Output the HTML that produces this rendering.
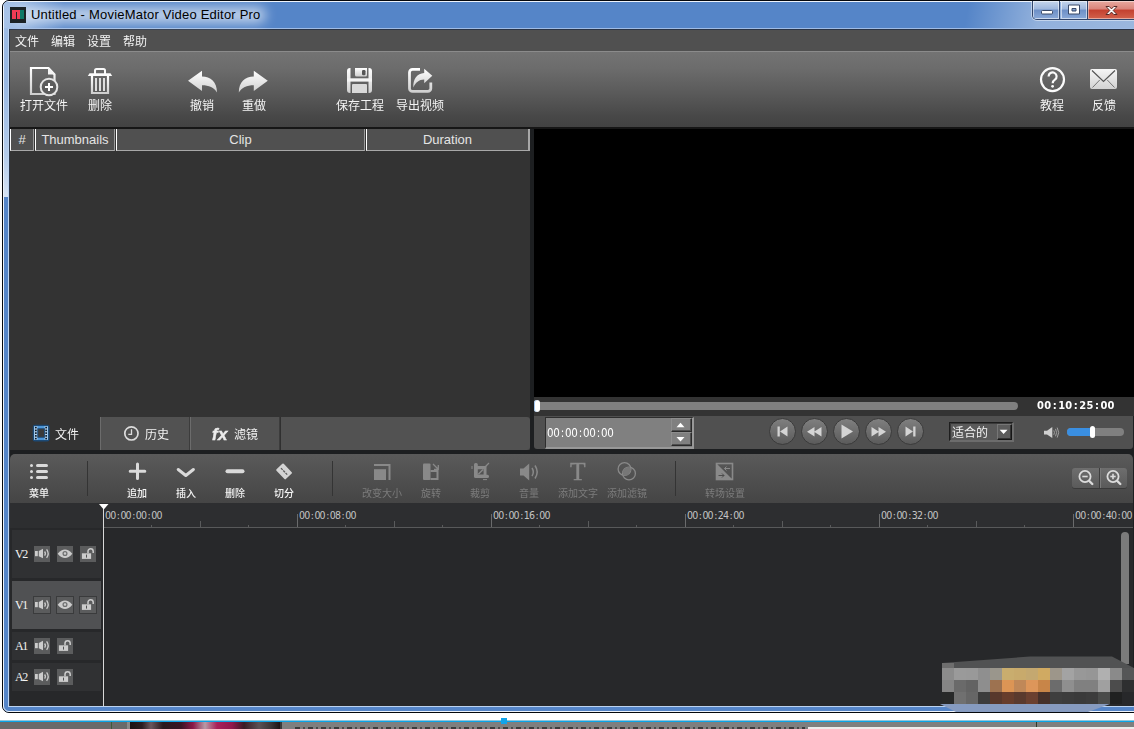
<!DOCTYPE html>
<html lang="zh-CN">
<head>
<meta charset="utf-8">
<title>Untitled - MovieMator Video Editor Pro</title>
<style>
*{box-sizing:border-box;margin:0;padding:0}
html,body{width:1134px;height:729px;overflow:hidden;background:#fff}
body{position:relative;font-family:"Liberation Sans","Noto Sans CJK SC",sans-serif;font-size:12px;color:#fff}
.a{position:absolute}
.cj,.lbl,.sl{will-change:transform}
.cj{font-family:"Liberation Sans","Noto Sans CJK SC",sans-serif;font-size:12px;line-height:14px;white-space:nowrap;color:#f2f2f2}
.lbl{position:absolute;text-align:center;white-space:nowrap;font-size:12px;line-height:14px;color:#f4f4f4;transform:translateX(-50%)}
.sl{position:absolute;text-align:center;white-space:nowrap;font-size:10px;line-height:12px;color:#f4f4f4;font-weight:500;transform:translateX(-50%)}
.sl.d{color:#7c7c7c;font-weight:400}
.vd{font-family:"DejaVu Sans Condensed","DejaVu Sans","Liberation Sans",sans-serif;font-stretch:condensed}
.vd i,.rt i{font-style:normal}
#dur,#spt{will-change:transform}
#dur i{margin:0 1.250px}
#spt i{margin:0 1.150px}
.rt i{margin:0 1.300px}
.hd{position:absolute;top:129px;height:22px;background:#505050;border-left:1px solid #fff;border-right:1px solid #9a9a9a;border-bottom:1px solid #a8a8a8;font-size:13px;line-height:22px;text-align:center;color:#e4e4e4}
.tk{position:absolute;left:12px;width:89px;background:#303133}
.tb{position:absolute;width:16px;height:16px;background:#5b5c5d}
.tn{position:absolute;left:15px;font-family:"Liberation Serif","Noto Serif CJK SC",serif;font-size:12px;line-height:12px;color:#f4f4f4;letter-spacing:-1.300px}
.rt{position:absolute;top:509px;font-family:"DejaVu Sans Condensed","DejaVu Sans","Liberation Sans",sans-serif;font-stretch:condensed;font-size:10.500px;line-height:12px;color:#c4c4c4;white-space:nowrap;letter-spacing:-.8px}
.mj{position:absolute;top:514px;width:1px;height:13px;background:#6a6b6c}
.md{position:absolute;top:521px;width:1px;height:6px;background:#5a5b5c}
.mn{position:absolute;top:525px;width:1px;height:2px;background:#5a5b5c}
</style>
</head>
<body>
<!-- desktop strip behind window -->
<div class="a" id="desk" style="left:0;top:713px;width:1134px;height:16px;background:#fff"></div>
<div class="a" style="left:0;top:722px;width:1134px;height:7px;background:#7f7f7f"></div>
<div class="a" style="left:0;top:722px;width:130px;height:7px;background:#6a6a6a"></div>
<div class="a" style="left:111px;top:722px;width:1px;height:7px;background:#3f5a3a"></div>
<div class="a" style="left:127px;top:722px;width:3px;height:7px;background:#8a8a8a"></div>
<div class="a" style="left:130px;top:722px;width:150px;height:7px;background:linear-gradient(90deg,#1c1214 0,#2a1c20 8%,#6a565c 14%,#2a1a1e 22%,#3a1424 34%,#8a1848 42%,#b89aa6 50%,#a8205a 58%,#90184c 68%,#3a1a24 76%,#5a5054 86%,#3a3436 94%,#1c1214 100%)"></div>
<div class="a" style="left:280px;top:722px;width:2px;height:7px;background:#3a3a3a"></div>
<div class="a" style="left:295px;top:727px;width:510px;height:2px;background:repeating-linear-gradient(90deg,#3c3c3c 0,#3c3c3c 5px,#7f7f7f 5px,#7f7f7f 8px,#4a4a4a 8px,#4a4a4a 10px,#7f7f7f 10px,#7f7f7f 13px)"></div>
<div class="a" style="left:808px;top:727px;width:326px;height:2px;background:#ececec"></div>
<div class="a" style="left:1036px;top:722px;width:1px;height:5px;background:#2e3a2a"></div>
<div class="a" style="left:0;top:721px;width:1134px;height:1px;background:#0aa5e8"></div>
<div class="a" style="left:0;top:720px;width:1134px;height:1px;background:#8fc6dc"></div>
<div class="a" style="left:501px;top:718px;width:6px;height:6px;background:#12a4ea"></div>

<!-- window frame -->
<div class="a" id="frame" style="left:2px;top:0;width:1140px;height:713px;border:1px solid #05080d;border-radius:7px 0 0 7px;background:#5585c8"></div>
<div class="a" id="frame2" style="left:3px;top:1px;width:1140px;height:711px;border:1px solid #eef4fc;border-radius:6px 0 0 6px;background:#5585c8"></div>
<div class="a" id="tgrad" style="left:4px;top:2px;width:1130px;height:27px;border-radius:5px 0 0 0;background:linear-gradient(100deg,rgba(255,255,255,0) 0,rgba(255,255,255,0) 950px,rgba(255,255,255,.36) 1022px,rgba(255,255,255,.42) 1134px),linear-gradient(90deg,#a8c3e8 0,#9dbbe4 14px,#5585c8 60px)"></div>
<div class="a" id="lstripe" style="left:4px;top:28px;width:5px;height:169px;background:linear-gradient(#9dbbe4 0,#98b7e2 30%,#b4cbea 75%,#d6e3f4 100%)"></div>
<!-- client inner border -->
<div class="a" id="client0" style="left:8px;top:28px;width:1130px;height:679px;border:1px solid #bcd3f0;border-top-color:#9fbce6;background:#1d1f21"></div>
<div class="a" id="client" style="left:9px;top:29px;width:1130px;height:677px;border:1px solid #2a3446;background:#1d1f21"></div>

<!-- title bar -->
<div class="a" id="glow" style="left:14px;top:7px;width:252px;height:16px;border-radius:8px;background:rgba(255,255,255,.62);filter:blur(6px)"></div>
<div class="a" id="appicon" style="left:10px;top:7px;width:16px;height:16px;background:#1c2326"></div>
<div class="a" style="left:12px;top:10px;width:8px;height:9px;background:#ee3b55"></div>
<div class="a" style="left:20px;top:10px;width:4px;height:9px;background:#0e7a68"></div>
<div class="a" style="left:16px;top:12px;width:1px;height:7px;background:#1c2326"></div>
<div class="a" id="title" style="left:31px;top:7px;font-size:13px;line-height:16px;color:#000;white-space:nowrap;letter-spacing:.21px">Untitled - MovieMator Video Editor Pro</div>
<!-- caption buttons -->
<div class="a" id="capbtns" style="left:1032px;top:1px;width:110px;height:19px;border:1px solid #31456b;border-top:none;border-radius:0 0 5px 5px;overflow:hidden;box-shadow:0 0 0 1px rgba(255,255,255,.45)">
  <div class="a" style="left:0;top:0;width:27px;height:18px;background:linear-gradient(#c6d6ec 0,#9db6dc 45%,#6d8fc6 50%,#8aa9d8 100%);border-right:1px solid #31456b;box-shadow:inset 0 0 0 1px rgba(255,255,255,.55)"></div>
  <div class="a" style="left:28px;top:0;width:27px;height:18px;background:linear-gradient(#c6d6ec 0,#9db6dc 45%,#6d8fc6 50%,#8aa9d8 100%);border-right:1px solid #31456b;box-shadow:inset 0 0 0 1px rgba(255,255,255,.55)"></div>
  <div class="a" style="left:55px;top:0;width:55px;height:18px;background:linear-gradient(#e8a99f 0,#d9837a 45%,#c4402f 50%,#d2624c 100%);box-shadow:inset 0 0 0 1px rgba(255,255,255,.45)"></div>
</div>
<svg class="a" style="left:0;top:0" width="1134" height="32" viewBox="0 0 1134 32">
  <rect x="1041.500" y="10.500" width="11" height="3.500" rx="1" fill="#fff" stroke="#3a4a68" stroke-width="1"/>
  <path d="M1068.500 5h11v9h-11z M1072 8.500h4v2.500h-4z" fill="#fff" fill-rule="evenodd" stroke="#3a4a68" stroke-width="1"/>
  <path d="M1106 6.500h3.200l2.300 2.400 2.300-2.400h3.200l-3.800 4 3.800 4h-3.200l-2.300-2.400-2.300 2.400h-3.200l3.800-4z" fill="#fff" stroke="#5a2a26" stroke-width="1" stroke-linejoin="round"/>
</svg>

<div class="a" style="left:9px;top:0;width:1125px;height:1px;background:#05080d"></div>
<!-- menu bar -->
<div class="a" id="menubar" style="left:10px;top:30px;width:1124px;height:21px;background:#505050"></div>
<div class="a cj" style="left:15px;top:35px;">文件</div>
<div class="a cj" style="left:51px;top:35px;">编辑</div>
<div class="a cj" style="left:87px;top:35px;">设置</div>
<div class="a cj" style="left:123px;top:35px;">帮助</div>

<!-- main toolbar -->
<div class="a" id="toolbar" style="left:10px;top:51px;width:1124px;height:76px;background:linear-gradient(#737373 0,#6c6c6c 22%,#5a5a5a 55%,#484848 85%,#424242 100%);border-top:1px solid #8b8b8b"></div>
<div class="a" style="left:10px;top:127px;width:1124px;height:2px;background:#161616"></div>
<div class="lbl" style="left:44px;top:99px">打开文件</div>
<div class="lbl" style="left:100px;top:99px">删除</div>
<div class="lbl" style="left:202px;top:99px">撤销</div>
<div class="lbl" style="left:253.500px;top:99px">重做</div>
<div class="lbl" style="left:360px;top:99px">保存工程</div>
<div class="lbl" style="left:420px;top:99px">导出视频</div>
<div class="lbl" style="left:1051.500px;top:99px">教程</div>
<div class="lbl" style="left:1104px;top:99px">反馈</div>

<!-- left panel -->
<div class="a" id="leftpanel" style="left:10px;top:129px;width:520px;height:321px;background:#333"></div>
<div class="hd" style="left:10px;width:24px">#</div>
<div class="hd" style="left:35px;width:80px">Thumbnails</div>
<div class="hd" style="left:116px;width:249px">Clip</div>
<div class="hd" style="left:366px;width:164px;border-right:2px solid #a8a8a8">Duration</div>
<!-- tabs -->
<div class="a" style="left:100px;top:417px;width:430px;height:33px;background:#525252;border-radius:0 3px 3px 0"></div>
<div class="a" style="left:100px;top:417px;width:1px;height:33px;background:#6c6c6c"></div>
<div class="a" style="left:190px;top:417px;width:1px;height:33px;background:#6c6c6c"></div>
<div class="a" style="left:189px;top:417px;width:1px;height:33px;background:#3c3c3c"></div>
<div class="a" style="left:280px;top:417px;width:1px;height:33px;background:#303030"></div>
<div class="a" style="left:279px;top:417px;width:1px;height:33px;background:#3c3c3c"></div>
<div class="a cj" style="left:55px;top:428px">文件</div>
<div class="a cj" style="left:145px;top:428px">历史</div>
<div class="a cj" style="left:234px;top:428px">滤镜</div>
<div class="a" style="left:212px;top:425px;font-size:17px;line-height:20px;font-weight:bold;font-style:italic;color:#ececec;letter-spacing:.3px;-webkit-text-stroke:.45px #ececec;will-change:transform">fx</div>

<!-- preview -->
<div class="a" id="video" style="left:534px;top:129px;width:600px;height:268px;background:#000"></div>
<div class="a" id="scrubrow" style="left:534px;top:397px;width:600px;height:19px;background:#333"></div>
<div class="a" style="left:536px;top:402px;width:482px;height:8px;background:#808080;border-radius:0 4px 4px 0"></div>
<div class="a" style="left:534px;top:400px;width:6px;height:12px;background:#fff;border-radius:3px;box-shadow:inset 1px 0 0 #9ec4ee"></div>
<div class="a vd" id="dur" style="left:1037px;top:399px;font-size:11px;line-height:14px;font-weight:bold;color:#fff;letter-spacing:.3px;white-space:nowrap">00<i>:</i>10<i>:</i>25<i>:</i>00</div>
<!-- controls row -->
<div class="a" id="ctrlrow" style="left:534px;top:416px;width:599px;height:33px;background:#505050;border-radius:0 0 3px 3px"></div>
<div class="a" id="spin" style="left:545px;top:417px;width:149px;height:32px;background:#808080;border:2px solid;border-width:1px 2px 2px 1px;border-color:#2e2e2e #989898 #989898 #2e2e2e"></div>
<div class="a vd" id="spt" style="left:547px;top:426px;font-size:11.500px;line-height:14px;color:#fff;letter-spacing:-.3px;white-space:nowrap">00<i>:</i>00<i>:</i>00<i>:</i>00</div>
<div class="a" style="left:671px;top:418px;width:21px;height:14px;background:#808080;border:1px solid;border-color:#8e8e8e #2a2a2a #2a2a2a #8e8e8e;box-shadow:inset -1px -1px 0 rgba(30,30,30,.5)"></div>
<div class="a" style="left:671px;top:432px;width:21px;height:14px;background:#808080;border:1px solid;border-color:#8e8e8e #2a2a2a #2a2a2a #8e8e8e;box-shadow:inset -1px -1px 0 rgba(30,30,30,.5)"></div>
<!-- combo -->
<div class="a" id="combo" style="left:949px;top:422px;width:65px;height:20px;background:#5a5a5a;border:2px solid;border-width:1px 2px 2px 1px;border-color:#1e1e1e #6c6c6c #6c6c6c #1e1e1e;box-shadow:inset 1px 1px 0 rgba(0,0,0,.35)"></div>
<div class="a cj" style="left:952px;top:426px">适合的</div>
<div class="a" style="left:997px;top:424px;width:15px;height:16px;background:#5c5c5c;border:1px solid;border-color:#767676 #161616 #161616 #767676;box-shadow:inset -1px -1px 0 rgba(0,0,0,.45)"></div>
<!-- volume -->
<div class="a" style="left:1067px;top:428px;width:57px;height:8px;background:#808080;border-radius:4px"></div>
<div class="a" style="left:1067px;top:428px;width:26px;height:8px;background:#3a8fe2;border-radius:4px 0 0 4px"></div>
<div class="a" style="left:1090px;top:426px;width:5px;height:12px;background:#fff;border-radius:2.500px"></div>

<!-- timeline toolbar -->
<div class="a" id="tltool" style="left:10px;top:454px;width:1123px;height:49px;background:linear-gradient(#5a5a5a,#454545);border-radius:5px 5px 0 0"></div>
<div class="a" style="left:87px;top:461px;width:1px;height:35px;background:#343434"></div>
<div class="a" style="left:332px;top:461px;width:1px;height:35px;background:#343434"></div>
<div class="a" style="left:675px;top:461px;width:1px;height:35px;background:#343434"></div>
<div class="sl" style="left:39px;top:488px">菜单</div>
<div class="sl" style="left:137px;top:488px">追加</div>
<div class="sl" style="left:186px;top:488px">插入</div>
<div class="sl" style="left:235px;top:488px">删除</div>
<div class="sl" style="left:284px;top:488px">切分</div>
<div class="sl d" style="left:382px;top:488px">改变大小</div>
<div class="sl d" style="left:431px;top:488px">旋转</div>
<div class="sl d" style="left:480px;top:488px">裁剪</div>
<div class="sl d" style="left:529px;top:488px">音量</div>
<div class="sl d" style="left:578px;top:488px">添加文字</div>
<div class="sl d" style="left:627px;top:488px">添加滤镜</div>
<div class="sl d" style="left:725px;top:488px">转场设置</div>
<!-- zoom buttons -->
<div class="a" style="left:1072px;top:468px;width:28px;height:20px;background:linear-gradient(#6e6e6e,#5a5a5a);border-radius:3px 0 0 3px;border-right:1px solid #3e3e3e;box-shadow:0 1px 0 #3a3a3a"></div>
<div class="a" style="left:1100px;top:468px;width:27px;height:20px;background:linear-gradient(#6e6e6e,#5a5a5a);border-radius:0 3px 3px 0;border-left:1px solid #7a7a7a;box-shadow:0 1px 0 #3a3a3a"></div>

<!-- ruler + tracks -->
<div class="a" id="ruler" style="left:10px;top:503px;width:1123px;height:25px;background:#2d2e30"></div>
<div class="a" style="left:104px;top:527px;width:1029px;height:1px;background:#58595a"></div>
<div class="a" id="tracks" style="left:104px;top:528px;width:1029px;height:178px;background:#27282a"></div>
<div class="a" id="hdrcol" style="left:10px;top:528px;width:93px;height:178px;background:#27282a"></div>
<div class="tk" style="top:530px;height:48px"></div>
<div class="tk" style="top:581px;height:48px;background:#505153"></div>
<div class="tk" style="top:632px;height:28px"></div>
<div class="tk" style="top:663px;height:28px"></div>
<div class="tn" style="top:548px">V2</div>
<div class="tn" style="top:599px">V1</div>
<div class="tn" style="top:640px">A1</div>
<div class="tn" style="top:671px">A2</div>
<div class="tb" style="left:34px;top:546px"></div><div class="tb" style="left:57px;top:546px"></div><div class="tb" style="left:80px;top:546px"></div>
<div class="tb" style="left:34px;top:597px;box-shadow:0 0 0 1px #3a3b3c"></div><div class="tb" style="left:57px;top:597px;box-shadow:0 0 0 1px #3a3b3c"></div><div class="tb" style="left:80px;top:597px;box-shadow:0 0 0 1px #3a3b3c"></div>
<div class="tb" style="left:34px;top:638px"></div><div class="tb" style="left:57px;top:638px"></div>
<div class="tb" style="left:34px;top:669px"></div><div class="tb" style="left:57px;top:669px"></div>
<div class="rt" style="left:105px">00<i>:</i>00<i>:</i>00<i>:</i>00</div>
<div class="mn" style="left:151px"></div><div class="md" style="left:200px"></div><div class="mn" style="left:248px"></div>
<div class="mj" style="left:297px"></div><div class="rt" style="left:299px">00<i>:</i>00<i>:</i>08<i>:</i>00</div>
<div class="mn" style="left:345px"></div><div class="md" style="left:394px"></div><div class="mn" style="left:442px"></div>
<div class="mj" style="left:491px"></div><div class="rt" style="left:493px">00<i>:</i>00<i>:</i>16<i>:</i>00</div>
<div class="mn" style="left:539px"></div><div class="md" style="left:588px"></div><div class="mn" style="left:636px"></div>
<div class="mj" style="left:685px"></div><div class="rt" style="left:687px">00<i>:</i>00<i>:</i>24<i>:</i>00</div>
<div class="mn" style="left:733px"></div><div class="md" style="left:782px"></div><div class="mn" style="left:830px"></div>
<div class="mj" style="left:879px"></div><div class="rt" style="left:881px">00<i>:</i>00<i>:</i>32<i>:</i>00</div>
<div class="mn" style="left:927px"></div><div class="md" style="left:976px"></div><div class="mn" style="left:1024px"></div>
<div class="mj" style="left:1073px"></div><div class="rt" style="left:1075px">00<i>:</i>00<i>:</i>40<i>:</i>00</div>

<!-- playhead -->
<div class="a" style="left:103px;top:504px;width:1px;height:202px;background:#d8d8d8"></div>
<svg class="a" style="left:98px;top:503px" width="12" height="8" viewBox="0 0 12 8"><path d="M1 1h9.500L5.750 6.500z" fill="#fff"/></svg>
<!-- vertical scrollbar -->
<div class="a" style="left:1121px;top:532px;width:8px;height:132px;background:#7b7b7b;border-radius:4px 4px 0 0"></div>

<!-- toolbar icons -->
<svg class="a" id="tbicons" style="left:0;top:60px" width="1134" height="40" viewBox="0 60 1134 40">
<defs>
<linearGradient id="gw" x1="0" y1="0" x2="0" y2="1"><stop offset="0" stop-color="#ffffff"/><stop offset="1" stop-color="#cfcfcf"/></linearGradient>
<linearGradient id="gw2" x1="0" y1="0" x2="0" y2="1"><stop offset="0" stop-color="#f6f6f6"/><stop offset="1" stop-color="#d2d2d2"/></linearGradient>
</defs>
<!-- open file -->
<path d="M31 68h17.500l6 6.500v19.500h-23.500z" fill="none" stroke="url(#gw)" stroke-width="2.200" stroke-linejoin="miter"/>
<path d="M48 67.500l7 7h-7z" fill="#f4f4f4"/>
<circle cx="49" cy="87" r="8.300" fill="#5c5c5c" stroke="#e4e4e4" stroke-width="2"/>
<path d="M45 87h8M49 83v8" stroke="#fff" stroke-width="2"/>
<!-- trash -->
<path d="M95 74v-3.500a1.500 1.500 0 0 1 1.500-1.500h7a1.500 1.500 0 0 1 1.500 1.500v3.500" fill="none" stroke="#fafafa" stroke-width="2"/>
<path d="M89.500 73.300h21l1.700 2.700h-24.400z" fill="#fafafa"/>
<path d="M92 76v17h16v-17" fill="none" stroke="url(#gw)" stroke-width="2.200"/>
<path d="M96 78v13M100 78v13M104 78v13" stroke="#ececec" stroke-width="1.800"/>
<!-- undo -->
<path id="undo" d="M188 80.700L202 70.800V76.500C210.500 76.500 217 82 217 92.500C214 87.500 209 85.200 202 85.200V91Z" fill="url(#gw)"/>
<!-- redo -->
<path d="M267.800 80.700L253.800 70.800V76.500C245.300 76.500 238.800 82 238.800 92.500C241.800 87.500 246.800 85.200 253.800 85.200V91Z" fill="url(#gw)"/>
<!-- save -->
<path d="M350.500 68h-0.500a3 3 0 0 0-3 3v19a3 3 0 0 0 3 3h.500zM368.500 68h.500a3 3 0 0 1 3 3v19a3 3 0 0 1-3 3h-.500z" fill="url(#gw)"/>
<rect x="347" y="78.300" width="25" height="3.300" fill="#f4f4f4"/>
<path d="M355 68h12v7a1.500 1.500 0 0 1-1.500 1.500h-9a1.500 1.500 0 0 1-1.500-1.500z" fill="url(#gw)"/>
<rect x="362" y="70" width="3.500" height="5.200" rx="1.200" fill="#555"/>
<path d="M352 85a1 1 0 0 1 1-1h13a1 1 0 0 1 1 1v8h-15z" fill="#d9d9d9"/>
<!-- export -->
<path d="M420 69.400h-7.500a3 3 0 0 0-3 3v16a3 3 0 0 0 3 3h15.300a3 3 0 0 0 3-3v-6" fill="none" stroke="url(#gw)" stroke-width="2.800"/>
<path d="M432.300 75.700L424.200 68.800V73C417 73.500 413 79 413.300 87.600C415.500 82.500 419 79.800 424.200 79.600V83.300Z" fill="url(#gw)"/>
<!-- help -->
<circle cx="1052.500" cy="79.600" r="11.500" fill="none" stroke="#fafafa" stroke-width="2.200"/>
<path d="M1048.600 76.500a4 4 0 1 1 6.300 3.200c-1.600 1.100-2.200 1.800-2.200 3.600" fill="none" stroke="#fafafa" stroke-width="2.200"/>
<circle cx="1052.600" cy="86.300" r="1.400" fill="#fafafa"/>
<!-- mail -->
<rect x="1090" y="69" width="27" height="20" rx="2" fill="url(#gw2)"/>
<path d="M1092 70.500l11.500 11 11.500-11" fill="none" stroke="#555" stroke-width="1.200"/>
<path d="M1092.500 87.500l7.200-7.500M1114.500 87.500l-7.200-7.500" stroke="#777" stroke-width="1"/>
</svg>

<!-- lower icons -->
<svg class="a" id="lowicons" style="left:0;top:395px" width="1134" height="315" viewBox="0 395 1134 315">
<defs><linearGradient id="gb" x1="0" y1="0" x2="0" y2="1"><stop offset="0" stop-color="#808080"/><stop offset="1" stop-color="#5a5a5a"/></linearGradient></defs>
<rect x="33.400" y="425.400" width="15.400" height="15.400" rx="1.600" fill="#4e97d8" stroke="#1c4a76" stroke-width="1.400"/><rect x="34.200" y="426.200" width="3.200" height="13.600" fill="#b4d3ef"/><rect x="44.600" y="426.200" width="3.200" height="13.600" fill="#b4d3ef"/><rect x="35" y="426.8" width="1.700" height="1.600" fill="#081622"/><rect x="45.300" y="426.8" width="1.700" height="1.600" fill="#081622"/><rect x="35" y="429.6" width="1.700" height="1.600" fill="#081622"/><rect x="45.300" y="429.6" width="1.700" height="1.600" fill="#081622"/><rect x="35" y="432.3" width="1.700" height="1.600" fill="#081622"/><rect x="45.300" y="432.3" width="1.700" height="1.600" fill="#081622"/><rect x="35" y="435.1" width="1.700" height="1.600" fill="#081622"/><rect x="45.300" y="435.1" width="1.700" height="1.600" fill="#081622"/><rect x="35" y="437.8" width="1.700" height="1.600" fill="#081622"/><rect x="45.300" y="437.8" width="1.700" height="1.600" fill="#081622"/><rect x="37.800" y="428.700" width="6.700" height="8.600" fill="#3a3a3a" stroke="#1f4f7d" stroke-width=".9"/>
<circle cx="131.400" cy="433.400" r="6.600" fill="none" stroke="#dcdcdc" stroke-width="1.700"/><path d="M131.500 429.300V434.300H128.300" fill="none" stroke="#dcdcdc" stroke-width="1.300"/>
<path d="M676.500 427.300l4-4.600 4 4.600z" fill="#fff"/><path d="M676.500 437l4 4.600 4-4.600z" fill="#fff"/>
<path d="M999.700 429.800h7.800l-3.900 4.300z" fill="#fff"/>
<circle cx="782.5" cy="431.5" r="13" fill="url(#gb)" stroke="#3a3a3a" stroke-width="1"/><circle cx="814.5" cy="431.5" r="13" fill="url(#gb)" stroke="#3a3a3a" stroke-width="1"/><circle cx="846.5" cy="431.5" r="13" fill="url(#gb)" stroke="#3a3a3a" stroke-width="1"/><circle cx="878.5" cy="431.5" r="13" fill="url(#gb)" stroke="#3a3a3a" stroke-width="1"/><circle cx="910.5" cy="431.5" r="13" fill="url(#gb)" stroke="#3a3a3a" stroke-width="1"/><path d="M777.500 426.500h2.300v10h-2.300zM787.500 426.500v10l-7.500-5z" fill="#d4d4d4"/><path d="M814.500 427v9.500l-7.500-4.750zM821.500 427v9.500l-7.500-4.750z" fill="#d4d4d4"/><path d="M841.500 424.500v14l11.500-7z" fill="#d4d4d4"/><path d="M871.500 427v9.500l7.500-4.750zM878.500 427v9.500l7.500-4.750z" fill="#d4d4d4"/><path d="M913.200 426.500h2.300v10h-2.300zM905.500 426.500v10l7.500-5z" fill="#d4d4d4"/>
<path d="M1044 430.800h3l5.300-3.700v11l-5.300-3.700h-3z" fill="#d0d0d0"/><path d="M1053.800 430.400q1.300 2.200 0 4.400M1055.500 428.900q2.200 3.700 0 7.400M1057.200 427.600q3 5 0 10" fill="none" stroke="#a8a8a8" stroke-width=".9"/>
<path d="M31.500 465.500h.01M31.500 471.500h.01M31.500 477.500h.01" stroke="#dadada" stroke-width="3" stroke-linecap="round"/><path d="M37.500 465.500h9M37.500 471.500h9M37.500 477.500h9" stroke="#dadada" stroke-width="3" stroke-linecap="round"/><path d="M130.200 471.300h14.600M137.500 464v14.600" stroke="#dadada" stroke-width="3" stroke-linecap="round"/><path d="M178.200 469.500l7.600 6 7.600-6" fill="none" stroke="#dadada" stroke-width="3" stroke-linecap="round" stroke-linejoin="round"/><path d="M227.500 471.300h15" stroke="#dadada" stroke-width="4" stroke-linecap="round"/><g transform="translate(284.100 471.400) rotate(46.500)"><rect x="-6.800" y="-5" width="13.600" height="10" rx="1" fill="#d4d4d4"/><path d="M-4.500 0h9" stroke="#5c5c5c" stroke-width="1.300" stroke-dasharray="2.400 .9"/></g>
<rect x="374" y="469.200" width="12" height="10.800" fill="#898989"/><path d="M374 465h15.500v15" fill="none" stroke="#898989" stroke-width="2"/><rect x="423" y="463.500" width="7.500" height="16.500" rx="1" fill="#898989"/><path d="M430.500 471h7v8h-7" fill="none" stroke="#898989" stroke-width="2"/><path d="M433 464l5 5M438.300 465v4.300h-4.300" fill="none" stroke="#898989" stroke-width="1.300"/><path fill-rule="evenodd" d="M474 464.500q0-1.500 1.500-1.500h.8q1.500 0 1.500 1.500v1.500h8.700v8.700h1q1.500 0 1.500 1.500v.3q0 1.500-1.500 1.500h-12q-1.500 0-1.500-1.500z M477.800 469.200v5.300h5.800v-5.300z" fill="#898989"/><path d="M478.300 474.200l4.800-4.800" stroke="#898989" stroke-width="1.400"/><path d="M484.500 467.500l4.500-4.500" stroke="#898989" stroke-width="1.200"/><path d="M472 466v3M483 479.600h4" stroke="#898989" stroke-width="1"/><path d="M520 468.500h3.500l5.700-5v17l-5.700-5h-3.500z" fill="#898989"/><path d="M532 468q2.600 4 0 8M535 465.500q4.400 6.500 0 13" fill="none" stroke="#898989" stroke-width="1.500"/><circle cx="624.500" cy="469" r="6.400" fill="none" stroke="#898989" stroke-width="1.300"/><circle cx="629" cy="473.500" r="6.400" fill="none" stroke="#898989" stroke-width="1.300"/><path d="M622.700 472.200A6.400 6.400 0 0 1 629.800 467.100 6.400 6.400 0 0 1 630.800 470.300 6.400 6.400 0 0 1 623.700 475.400 6.400 6.400 0 0 1 622.700 472.200Z" fill="#777"/><rect x="716.500" y="463.500" width="16" height="16" fill="none" stroke="#898989" stroke-width="1.600"/><path d="M716.500 463.500v16h16z" fill="#898989"/><path d="M730 468.500h-5.500M726.500 466.500l-2 2 2 2" fill="none" stroke="#898989" stroke-width="1"/><path d="M718.500 475.500h5.500M722 473.500l2 2-2 2" fill="none" stroke="#4c4c4c" stroke-width="1"/>
<circle cx="1085.0" cy="476.500" r="5.600" fill="none" stroke="#dcdcdc" stroke-width="1.800"/><path d="M1089.3 481l3 3" stroke="#dcdcdc" stroke-width="2.400" stroke-linecap="round"/><path d="M1082.3 476.500h5.400" stroke="#dcdcdc" stroke-width="1.600"/><circle cx="1113.0" cy="476.500" r="5.600" fill="none" stroke="#dcdcdc" stroke-width="1.800"/><path d="M1117.3 481l3 3" stroke="#dcdcdc" stroke-width="2.400" stroke-linecap="round"/><path d="M1110.3 476.500h5.400" stroke="#dcdcdc" stroke-width="1.600"/><path d="M1113.0 473.800v5.400" stroke="#dcdcdc" stroke-width="1.600"/>
<rect x="35.0" y="551.0" width="2.800" height="5.200" fill="#cccccc"/><path d="M38.8 551.0L43.0 548.8V558.2L38.8 556.2Z" fill="#cccccc"/><path d="M44.6 551.5q1.600 2.100 0 4.200M46.6 549.4q3.200 4.200 0 8.400" fill="none" stroke="#cccccc" stroke-width="1.300"/><path d="M57.7 553.7Q65.0 545.5 72.3 553.7Q65.0 562.3 57.7 553.7Z" fill="#cccccc"/><circle cx="65.0" cy="553.5" r="1.900" fill="none" stroke="#707172" stroke-width="1.300"/><rect x="81.9" y="553.3" width="9.200" height="5.600" fill="#cccccc"/><rect x="86.0" y="554.6" width="1" height="3" fill="#505152"/><path d="M88.0 553.3v-2a2.600 2.600 0 0 1 5.200 0v1.600" fill="none" stroke="#cccccc" stroke-width="1.500"/><rect x="35.0" y="602.0" width="2.800" height="5.200" fill="#cccccc"/><path d="M38.8 602.0L43.0 599.8V609.2L38.8 607.2Z" fill="#cccccc"/><path d="M44.6 602.5q1.600 2.100 0 4.200M46.6 600.4q3.200 4.200 0 8.400" fill="none" stroke="#cccccc" stroke-width="1.300"/><path d="M57.7 604.7Q65.0 596.5 72.3 604.7Q65.0 613.3 57.7 604.7Z" fill="#cccccc"/><circle cx="65.0" cy="604.5" r="1.900" fill="none" stroke="#707172" stroke-width="1.300"/><rect x="81.9" y="604.3" width="9.200" height="5.600" fill="#cccccc"/><rect x="86.0" y="605.6" width="1" height="3" fill="#505152"/><path d="M88.0 604.3v-2a2.600 2.600 0 0 1 5.200 0v1.600" fill="none" stroke="#cccccc" stroke-width="1.500"/><rect x="35.0" y="643.0" width="2.800" height="5.200" fill="#cccccc"/><path d="M38.8 643.0L43.0 640.8V650.2L38.8 648.2Z" fill="#cccccc"/><path d="M44.6 643.5q1.600 2.100 0 4.200M46.6 641.4q3.200 4.200 0 8.400" fill="none" stroke="#cccccc" stroke-width="1.300"/><rect x="58.9" y="645.3" width="9.200" height="5.600" fill="#cccccc"/><rect x="63.0" y="646.6" width="1" height="3" fill="#505152"/><path d="M65.0 645.3v-2a2.600 2.600 0 0 1 5.200 0v1.600" fill="none" stroke="#cccccc" stroke-width="1.500"/><rect x="35.0" y="674.0" width="2.800" height="5.200" fill="#cccccc"/><path d="M38.8 674.0L43.0 671.8V681.2L38.8 679.2Z" fill="#cccccc"/><path d="M44.6 674.5q1.600 2.100 0 4.200M46.6 672.4q3.200 4.200 0 8.400" fill="none" stroke="#cccccc" stroke-width="1.300"/><rect x="58.9" y="676.3" width="9.200" height="5.600" fill="#cccccc"/><rect x="63.0" y="677.6" width="1" height="3" fill="#505152"/><path d="M65.0 676.3v-2a2.600 2.600 0 0 1 5.200 0v1.600" fill="none" stroke="#cccccc" stroke-width="1.500"/>
</svg>
<div class="a" style="left:570px;top:458px;font-family:'Liberation Serif',serif;font-size:25.500px;line-height:28px;color:#898989;-webkit-text-stroke:.4px #898989">T</div>
<!-- mosaic watermark -->
<svg class="a" style="left:936px;top:650px" width="198" height="64" viewBox="936 650 198 64">
<path d="M942 663L1030 656.500H1112L1134 668V680L1122 704H942Z" fill="#515253"/>
<path d="M1110 668h12l12 0v12l-6 12-6 12h-12z" fill="#2b2c2d"/>
<rect x="942" y="668" width="12" height="12" fill="#8c8c8c"/><rect x="954" y="668" width="12" height="12" fill="#9a9a9a"/><rect x="966" y="668" width="12" height="12" fill="#999999"/><rect x="978" y="668" width="12" height="12" fill="#8f8f8f"/><rect x="990" y="668" width="12" height="12" fill="#9a968c"/><rect x="1002" y="668" width="12" height="12" fill="#c9ad6e"/><rect x="1014" y="668" width="12" height="12" fill="#c8aa6c"/><rect x="1026" y="668" width="12" height="12" fill="#c4a870"/><rect x="1038" y="668" width="12" height="12" fill="#d0aa62"/><rect x="1050" y="668" width="12" height="12" fill="#9d968a"/><rect x="1062" y="668" width="12" height="12" fill="#a3a3a3"/><rect x="1074" y="668" width="12" height="12" fill="#989898"/><rect x="1086" y="668" width="12" height="12" fill="#969696"/><rect x="1098" y="668" width="12" height="12" fill="#b0b0b0"/><rect x="1110" y="668" width="12" height="12" fill="#8a8a8a"/><rect x="1122" y="668" width="12" height="12" fill="#555657"/>
<rect x="942" y="680" width="12" height="12" fill="#858585"/><rect x="954" y="680" width="12" height="12" fill="#6a6a6a"/><rect x="966" y="680" width="12" height="12" fill="#636363"/><rect x="978" y="680" width="12" height="12" fill="#8e8e8e"/><rect x="990" y="680" width="12" height="12" fill="#9d7250"/><rect x="1002" y="680" width="12" height="12" fill="#dc9555"/><rect x="1014" y="680" width="12" height="12" fill="#c08858"/><rect x="1026" y="680" width="12" height="12" fill="#dd965a"/><rect x="1038" y="680" width="12" height="12" fill="#c88548"/><rect x="1050" y="680" width="12" height="12" fill="#6c6c6c"/><rect x="1062" y="680" width="12" height="12" fill="#8f8f8f"/><rect x="1074" y="680" width="12" height="12" fill="#808080"/><rect x="1086" y="680" width="12" height="12" fill="#808080"/><rect x="1098" y="680" width="12" height="12" fill="#a0a0a0"/><rect x="1110" y="680" width="12" height="12" fill="#4c4c4c"/><rect x="1122" y="680" width="12" height="12" fill="#2e2f30"/>
<rect x="942" y="692" width="12" height="12" fill="#282929"/><rect x="954" y="692" width="12" height="12" fill="#707070"/><rect x="966" y="692" width="12" height="12" fill="#666666"/><rect x="978" y="692" width="12" height="12" fill="#3c3c3c"/><rect x="990" y="692" width="12" height="12" fill="#58382c"/><rect x="1002" y="692" width="12" height="12" fill="#673d2c"/><rect x="1014" y="692" width="12" height="12" fill="#5a3a2e"/><rect x="1026" y="692" width="12" height="12" fill="#6b4030"/><rect x="1038" y="692" width="12" height="12" fill="#45302a"/><rect x="1050" y="692" width="12" height="12" fill="#3e3e3e"/><rect x="1062" y="692" width="12" height="12" fill="#3c3c3c"/><rect x="1074" y="692" width="12" height="12" fill="#3a3a3a"/><rect x="1086" y="692" width="12" height="12" fill="#3c3c3c"/><rect x="1098" y="692" width="12" height="12" fill="#4a4b4a"/><rect x="1110" y="692" width="12" height="12" fill="#202121"/><rect x="1122" y="692" width="12" height="12" fill="#27282a"/>
<rect x="942" y="663" width="12" height="5" fill="#6e6e6e"/><path d="M1122 668h12v12h-6z" fill="#555657"/>
<path d="M940 704h170l-22 8H956z" fill="#869bc0"/>
</svg>
</body>
</html>
